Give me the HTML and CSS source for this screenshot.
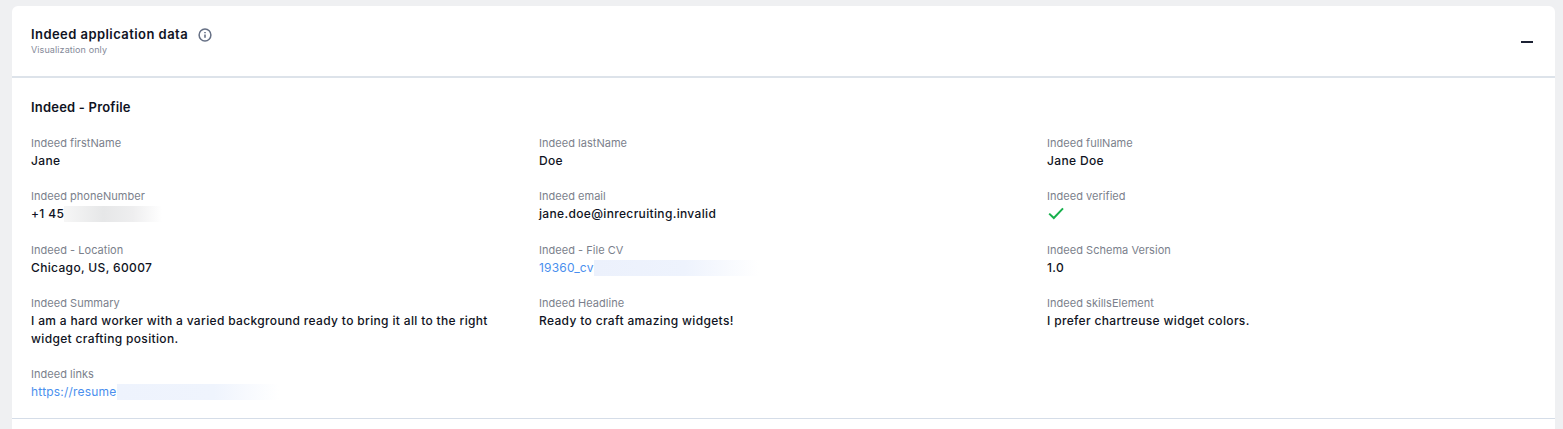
FILE: index.html
```html
<!DOCTYPE html>
<html lang="en">
<head>
<meta charset="utf-8">
<title>Indeed application data</title>
<link rel="stylesheet" href="styles.css">
</head>
<body>
<section class="card">
  <header class="card-head">
    <div class="head-text">
      <div class="title-row">
        <h2 class="title">Indeed application data</h2>
        <svg class="info" width="14" height="14" viewBox="0 0 14 14" fill="none" stroke="#667085"><circle cx="7" cy="7" r="5.9" stroke-width="1.5"/><path d="M7 6.4v3.4" stroke-width="1.6"/><path d="M7 4.1v1.2" stroke-width="1.6"/></svg>
      </div>
      <p class="subtitle">Visualization only</p>
    </div>
    <span class="collapse"></span>
  </header>
  <div class="card-body">
    <h3 class="section-title">Indeed - Profile</h3>
    <div class="grid">
      <div class="field"><div class="label">Indeed firstName</div><div class="value">Jane</div></div>
      <div class="field"><div class="label">Indeed lastName</div><div class="value">Doe</div></div>
      <div class="field"><div class="label">Indeed fullName</div><div class="value">Jane Doe</div></div>

      <div class="field"><div class="label">Indeed phoneNumber</div><div class="value">+1 45<span class="blur blur-grey"></span></div></div>
      <div class="field"><div class="label">Indeed email</div><div class="value">jane.doe@inrecruiting.invalid</div></div>
      <div class="field"><div class="label">Indeed verified</div><div class="value"><svg class="check" width="16" height="17" viewBox="0 0 16 17" fill="none"><path d="M1.2 8.6 5.8 13 15 3.4" stroke="#17b04c" stroke-width="2"/></svg></div></div>

      <div class="field"><div class="label">Indeed - Location</div><div class="value">Chicago, US, 60007</div></div>
      <div class="field"><div class="label">Indeed - File CV</div><div class="value link">19360_cv<span class="blur blur-blue-cv"></span></div></div>
      <div class="field"><div class="label">Indeed Schema Version</div><div class="value">1.0</div></div>

      <div class="field"><div class="label">Indeed Summary</div><div class="value wrap">I am a hard worker with a varied background ready to bring it all to the right widget crafting position.</div></div>
      <div class="field"><div class="label">Indeed Headline</div><div class="value">Ready to craft amazing widgets!</div></div>
      <div class="field"><div class="label">Indeed skillsElement</div><div class="value">I prefer chartreuse widget colors.</div></div>

      <div class="field"><div class="label">Indeed links</div><div class="value link">https://resume<span class="blur blur-blue-link"></span></div></div>
    </div>
  </div>
</section>
</body>
</html>
```
FILE: styles.css
```css
* { box-sizing: border-box; }
html, body { margin: 0; height: 429px; overflow: hidden; }
body {
  background: #eff0f2;
  padding: 6px 8px 0 12px;
  font-family: Inter, "Noto Sans", sans-serif;
  color: #101323;
}
.card {
  background: #fff;
  border-radius: 6px 6px 0 0;
  height: 423px;
}
.card-head {
  height: 72px;
  border-bottom: 2px solid #dde3ea;
  padding: 20px 22px 0 19px;
  display: flex;
  justify-content: space-between;
}
.title-row { display: flex; align-items: center; gap: 10px; height: 17px; }
.title { margin: 0; font-size: 13px; font-weight: 600; line-height: 17px; letter-spacing: .44px; }
.info { display: block; }
.subtitle { margin: 1px 0 0; font-size: 9px; line-height: 12px; color: #858a99; letter-spacing: .1px; }
.collapse { display: block; width: 12px; height: 2px; background: #1c2133; margin-top: 15px; }
.card-body { padding: 20px 19px 0; height: 341px; border-bottom: 1px solid #d5dde8; }
.section-title { margin: 0 0 19px; font-size: 13px; font-weight: 600; line-height: 18px; letter-spacing: .2px; }
.grid {
  display: grid;
  grid-template-columns: repeat(3, 508px);
  row-gap: 18.33px;
}
.label { font-size: 11px; line-height: 16px; color: #7b7f8c; letter-spacing: .03px; }
.value { font-size: 12px; line-height: 18px; font-weight: 500; color: #101323; letter-spacing: .34px; margin-top: 1px; height: 18px; white-space: nowrap; }
.value.wrap { white-space: normal; width: 470px; height: 36px; }
.value.link { color: #4a8fee; font-weight: 400; letter-spacing: .2px; }
.check { display: block; margin-left: 1px; }
.blur { display: inline-block; height: 16px; vertical-align: -4px; }
.blur-grey { width: 98px; background: linear-gradient(90deg, #f6f6f6 0, #e6e7e8 40%, #eeeeef 70%, #fff 100%); }
.blur-blue-cv { width: 165px; background: linear-gradient(90deg, #ecf1fc 0, #eef3fd 55%, #fff 100%); }
.blur-blue-link { width: 162px; background: linear-gradient(90deg, #eef3fd 0, #eff4fd 60%, #fff 100%); }
```
